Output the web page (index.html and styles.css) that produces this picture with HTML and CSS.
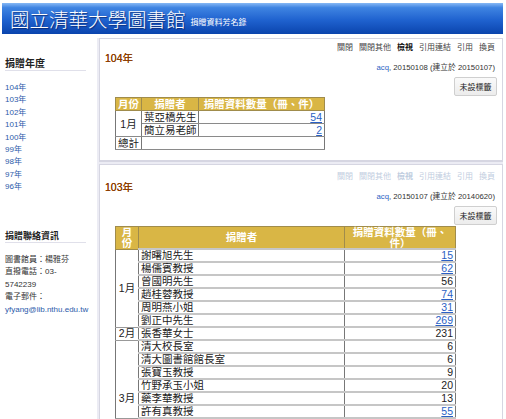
FILE: index.html
```html
<!DOCTYPE html>
<html lang="zh-Hant">
<head>
<meta charset="utf-8">
<title>國立清華大學圖書館 捐贈資料芳名錄</title>
<link rel="stylesheet" href="styles.css">
</head>
<body>
<header class="banner">
  <span class="banner-title">國立清華大學圖書館</span>
  <span class="banner-sub">捐贈資料芳名錄</span>
</header>
<div class="layout">
  <aside class="sidebar">
    <h3 class="side-head side-head-years">捐贈年度</h3>
    <ul class="year-list">
      <li><a href="#">104年</a></li>
      <li><a href="#">103年</a></li>
      <li><a href="#">102年</a></li>
      <li><a href="#">101年</a></li>
      <li><a href="#">100年</a></li>
      <li><a href="#">99年</a></li>
      <li><a href="#">98年</a></li>
      <li><a href="#">97年</a></li>
      <li><a href="#">96年</a></li>
    </ul>
    <h3 class="side-head side-head-contact">捐贈聯絡資訊</h3>
    <p class="contact">圖書館員：楊雅芬<br>直撥電話：03-5742239<br>電子郵件：<br><a href="#">yfyang@lib.nthu.edu.tw</a></p>
  </aside>
  <main class="main">
    <section class="panel">
      <nav class="toolbar">
        <span>關閉</span><span>關閉其他</span><span class="toolbar-current">檢視</span><span>引用連結</span><span>引用</span><span>換頁</span>
      </nav>
      <div class="year-title">104年</div>
      <div class="meta"><a href="#">acq</a>, 20150108 (建立於 20150107)</div>
      <div class="tag-row"><button class="tag-btn">未設標籤</button></div>
      <table class="donors donors-small">
        <colgroup><col class="c-month-s"><col class="c-name-s"><col class="c-qty-s"></colgroup>
        <thead>
          <tr><th>月份</th><th>捐贈者</th><th>捐贈資料數量（冊、件）</th></tr>
        </thead>
        <tbody>
          <tr><td rowspan="2" class="month">1月</td><td>葉亞橋先生</td><td class="qty"><a href="#">54</a></td></tr>
          <tr><td>簡立易老師</td><td class="qty"><a href="#">2</a></td></tr>
          <tr><td class="month">總計</td><td colspan="2"></td></tr>
        </tbody>
      </table>
    </section>
    <section class="panel panel-later">
      <nav class="toolbar toolbar-faded">
        <span>關閉</span><span>關閉其他</span><span class="toolbar-current">檢視</span><span>引用連結</span><span>引用</span><span>換頁</span>
      </nav>
      <div class="year-title">103年</div>
      <div class="meta"><a href="#">acq</a>, 20150107 (建立於 20140620)</div>
      <div class="tag-row"><button class="tag-btn">未設標籤</button></div>
      <table class="donors donors-wide">
        <colgroup><col class="c-month-w"><col class="c-name-w"><col class="c-qty-w"></colgroup>
        <thead>
          <tr><th>月份</th><th>捐贈者</th><th>捐贈資料數量（冊、件）</th></tr>
        </thead>
        <tbody>
          <tr><td rowspan="6" class="month">1月</td><td>謝曙旭先生</td><td class="qty"><a href="#">15</a></td></tr>
          <tr><td>楊儒賓教授</td><td class="qty"><a href="#">62</a></td></tr>
          <tr><td>曾國明先生</td><td class="qty">56</td></tr>
          <tr><td>趙桂蓉教授</td><td class="qty"><a href="#">74</a></td></tr>
          <tr><td>周明燕小姐</td><td class="qty"><a href="#">31</a></td></tr>
          <tr><td>劉正中先生</td><td class="qty"><a href="#">269</a></td></tr>
          <tr><td class="month">2月</td><td>張香華女士</td><td class="qty">231</td></tr>
          <tr><td rowspan="6" class="month month-low">3月</td><td>清大校長室</td><td class="qty">6</td></tr>
          <tr><td>清大圖書館館長室</td><td class="qty">6</td></tr>
          <tr><td>張寶玉教授</td><td class="qty">9</td></tr>
          <tr><td>竹野承玉小姐</td><td class="qty">20</td></tr>
          <tr><td>藥李華教授</td><td class="qty">13</td></tr>
          <tr><td>許有真教授</td><td class="qty"><a href="#">55</a></td></tr>
        </tbody>
      </table>
    </section>
  </main>
</div>
</body>
</html>
```

FILE: styles.css
```css
html {
  overflow: hidden;
}

body {
  margin: 0;
  width: 506px;
  background: #ffffff;
  color: #222222;
  font-family: "Liberation Sans", "Noto Sans CJK TC", sans-serif;
}

a {
  color: #2a5fc4;
  text-decoration: none;
}

/* ---------- banner ---------- */
.banner {
  margin: 3px 3px 0 2px;
  height: 31px;
  box-sizing: border-box;
  padding-left: 8px;
  display: flex;
  align-items: center;
  background: linear-gradient(to bottom, #86b8f5 0%, #3f84e2 15%, #1f62cf 55%, #0a44ad 100%);
}

.banner-title {
  color: #ffffff;
  font-family: "Noto Sans CJK TC", sans-serif;
  font-weight: 300;
  font-size: 19.5px;
  line-height: 20px;
  text-shadow: 1px 1px 1px rgba(0, 10, 60, 0.55);
}

.banner-sub {
  color: #ffffff;
  font-family: "Noto Sans CJK TC", sans-serif;
  font-size: 8px;
  line-height: 8px;
  margin-left: 5px;
  margin-top: 6px;
}

/* ---------- layout ---------- */
.layout {
  display: flex;
  margin-top: 4px;
  padding-right: 3px;
  min-height: 381px;
}

.sidebar {
  flex: none;
  width: 81px;
  padding: 20px 11px 0 5px;
}

.main {
  flex: 1;
  min-width: 0;
  background: #ececf4;
  padding-left: 2px;
}

/* ---------- sidebar ---------- */
.side-head {
  margin: 0;
  font-weight: bold;
  line-height: 12px;
  color: #222222;
  border-bottom: 1px solid #e0e0ea;
}

.side-head-years {
  font-size: 10px;
}

.side-head-contact {
  font-size: 9px;
  margin-top: 36px;
}

.year-list {
  list-style: none;
  margin: 11px 0 0 0;
  padding: 0;
  font-size: 8px;
  line-height: 12.4px;
}

.year-list a {
  color: #2b5aaa;
}

.contact {
  margin: 11px 0 0 0;
  font-size: 8px;
  line-height: 12.5px;
  color: #333333;
}

.contact a {
  color: #2b5aaa;
}

/* ---------- panels ---------- */
.panel {
  background: #ffffff;
  border: 1px solid #d6d6e2;
  border-bottom-width: 2px;
  padding: 3px 5px 10px 5px;
  margin-bottom: 2px;
}

.panel-later {
  padding-top: 6px;
}

.toolbar {
  display: flex;
  justify-content: flex-end;
  gap: 6px;
  padding-right: 2px;
  font-size: 8px;
  line-height: 11px;
  color: #444444;
}

.toolbar-current {
  font-weight: bold;
  color: #111111;
}

.toolbar-faded,
.toolbar-faded .toolbar-current {
  color: #bfcde0;
}

.year-title {
  font-size: 10.5px;
  line-height: 10px;
  color: #8b3c00;
  text-shadow: 0 0 0.3px #8b3c00;
}

.meta {
  text-align: right;
  padding-right: 2px;
  font-size: 7.75px;
  line-height: 10px;
  color: #333333;
}

.tag-row {
  display: flex;
  justify-content: flex-end;
  margin-top: 4px;
}

.tag-btn {
  width: 43px;
  height: 19px;
  padding: 0;
  border: 1px solid #cfcfcf;
  border-radius: 2px;
  background: linear-gradient(#fafafa, #ececec);
  color: #222222;
  font-family: "Noto Sans CJK TC", sans-serif;
  font-size: 8px;
  line-height: 10px;
}

/* ---------- tables ---------- */
.donors {
  margin: 1px 0 0 10px;
  border-collapse: collapse;
  table-layout: fixed;
  border: 1px solid #777777;
  font-family: "Liberation Sans", "Noto Sans CJK TC", sans-serif;
  font-size: 10.5px;
  color: #222222;
}

.donors th {
  background: #d9b645;
  color: #ffffff;
  font-weight: bold;
  text-align: center;
  border: 1px solid #a08c4c;
  padding: 0 2px;
}

.donors td {
  border-left: 1px solid #777777;
  border-right: 1px solid #777777;
  border-top: 1px solid #b8b8b8;
  border-bottom: 1px solid #b8b8b8;
  padding: 0 2px;
  white-space: nowrap;
}

.donors .month {
  text-align: center;
  padding: 0 1px;
}

.donors .qty {
  text-align: right;
}

.donors .qty a {
  color: #2a5fc4;
  text-decoration: underline;
}

.donors-small {
  width: 209px;
}

.donors-small th {
  line-height: 12px;
  padding: 0 1px;
}

.donors-small td {
  line-height: 12px;
  border-top-color: #8a8a8a;
  border-bottom-color: #8a8a8a;
}

.c-month-s { width: 26px; }
.c-name-s { width: 57px; }
.c-qty-s { width: 126px; }

.donors-wide {
  width: 340px;
}

.donors-wide th {
  line-height: 10.5px;
}

.donors-wide td {
  line-height: 11px;
  border-top: 2px solid #c6c6c6;
  border-bottom: 2px solid #c6c6c6;
}

.donors-wide td.month {
  border-top: 1px solid #999999;
  border-bottom: 1px solid #999999;
}

.donors-wide td.month-low {
  vertical-align: bottom;
  padding-bottom: 14px;
}

.c-month-w { width: 23px; }
.c-name-w { width: 206px; }
.c-qty-w { width: 111px; }
```
